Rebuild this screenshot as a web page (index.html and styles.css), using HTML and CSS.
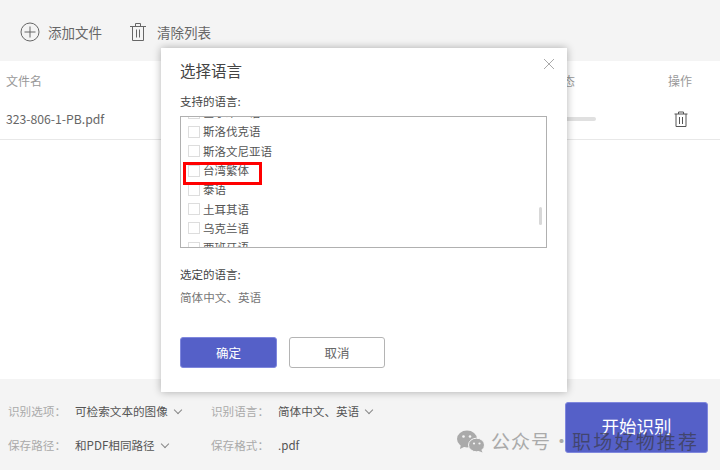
FILE: index.html
```html
<!DOCTYPE html>
<html>
<head>
<meta charset="utf-8" />
<title>选择语言</title>
<link rel="stylesheet" href="styles.css">
</head>
<body>

<div class="app">
	<div class="toolbar">
		<div class="tool">
			<svg width="20" height="20" viewBox="0 0 20 20" fill="none" stroke="#666"><circle cx="10" cy="10" r="9"/><path d="M10 4.500v11M4.500 10h11"/></svg>
			<span>添加文件</span>
		</div>
		<div class="tool tool-clear">
			<svg width="16" height="18" viewBox="0 0 16 18" fill="none" stroke="#666"><path d="M0 3.500h16M5.500 3.500V.5h5v3M2.500 3.500v14h11v-14M6.500 6.500v8M9.500 6.500v8"/></svg>
			<span>清除列表</span>
		</div>
	</div>

	<div class="files">
		<div class="file-head">
			<span>文件名</span>
			<span class="head-state">状态</span>
			<span class="head-action">操作</span>
		</div>
		<div class="file-row">
			<span class="file-name">323-806-1-PB.pdf</span>
			<div class="progress"></div>
			<svg class="row-trash" width="14" height="16" viewBox="0 0 14 16" fill="none" stroke="#555"><path d="M.5 3h13M4.500 3V1h5v2M2 3v12.500h10V3M5.500 6v7M8.500 6v7"/></svg>
		</div>
	</div>

	<div class="options">
		<div class="option-lines">
			<div class="option-line">
				<span class="label">识别选项：</span>
				<span class="value value-a">可检索文本的图像<i class="arrow"></i></span>
				<span class="label">识别语言：</span>
				<span class="value">简体中文、英语<i class="arrow"></i></span>
			</div>
			<div class="option-line">
				<span class="label">保存路径：</span>
				<span class="value value-a">和PDF相同路径<i class="arrow"></i></span>
				<span class="label">保存格式：</span>
				<span class="value">.pdf</span>
			</div>
		</div>
		<button class="start">开始识别</button>
	</div>
</div>

<div class="dialog">
	<svg class="close" width="10" height="10" viewBox="0 0 10 10" fill="none" stroke="#aaa"><path d="M0 0l10 10M10 0L0 10"/></svg>
	<h2>选择语言</h2>
	<p class="dlg-label">支持的语言:</p>
	<div class="lang-box">
		<ul class="lang-list">
			<li><i></i>塞尔维亚语</li>
			<li><i></i>斯洛伐克语</li>
			<li><i></i>斯洛文尼亚语</li>
			<li><i></i>台湾繁体</li>
			<li><i></i>泰语</li>
			<li><i></i>土耳其语</li>
			<li><i></i>乌克兰语</li>
			<li><i></i>西班牙语</li>
		</ul>
		<div class="thumb"></div>
	</div>
	<p class="dlg-label chosen-label">选定的语言:</p>
	<p class="chosen">简体中文、英语</p>
	<div class="dlg-btns">
		<button class="ok">确定</button>
		<button class="cancel">取消</button>
	</div>
</div>

<div class="mark"></div>

<div class="wm">
	<svg width="28" height="23" viewBox="0 0 28 23" fill="#aaa"><ellipse cx="10" cy="9" rx="10" ry="8.500"/><path d="M4 14l-1 5 6-3z"/><ellipse cx="19.500" cy="15" rx="8" ry="6.800" stroke="#f4f4f4"/><path d="M24 19l1.500 3.500-5-2z"/><circle cx="6.500" cy="6.500" r="1.300" fill="#f4f4f4"/><circle cx="13" cy="6.500" r="1.300" fill="#f4f4f4"/><circle cx="17" cy="13.500" r="1.100" fill="#f4f4f4"/><circle cx="22.500" cy="13.500" r="1.100" fill="#f4f4f4"/></svg>
	<span class="wm-gray">公众号</span>
	<span class="wm-dot">·</span>
	<span class="wm-dark">职场好物推荐</span>
</div>

</body>
</html>
```

FILE: styles.css
```css
/*reset*/
* { padding: 0; margin: 0; box-sizing: border-box; }
html, body { width: 720px; height: 470px; overflow: hidden; }
body { font-family: "Noto Sans CJK SC", "Noto Sans", sans-serif; font-size: 11.6px; color: #666; background: #fff; }
li { list-style: none; }
button { font-family: inherit; cursor: pointer; }

/*app*/
.app { display: flex; flex-direction: column; height: 470px; }

.toolbar { height: 61px; background: #f4f4f4; display: flex; align-items: center; padding: 3px 0 0 20px; }
.tool { display: flex; align-items: center; gap: 8px; font-size: 13.5px; line-height: 20px; color: #666; }
.tool-clear { margin-left: 28px; gap: 11px; }

.files { flex: 1; }
.file-head { display: flex; height: 38px; padding: 0 28px 0 6px; align-items: center; justify-content: space-between; color: #999; font-size: 12px; }
.head-state { margin-left: auto; width: 117px; }
.file-row { display: flex; height: 41px; padding: 0 32px 0 6px; align-items: center; border-bottom: 1px solid #e8e8e8; font-size: 12.2px; }
.file-name { color: #666; }
.progress { width: 100px; height: 4px; margin-left: auto; margin-right: 78px; border-radius: 2px; background: #e0e0e0; }
.row-trash { flex: none; }

.options { height: 91px; background: #f4f4f4; display: flex; align-items: flex-start; justify-content: space-between; padding: 15px 12px 0 8px; }
.option-line { display: flex; height: 34px; align-items: center; }
.label { width: 67px; color: #aaa; }
.value { color: #555; }
.value-a { width: 136px; }
.arrow { display: inline-block; width: 6px; height: 6px; margin: 0 0 3px 7px; border-right: 1px solid #888; border-bottom: 1px solid #888; transform: rotate(45deg); }
.start { width: 143px; height: 51px; margin-top: 8px; padding-bottom: 4px; border: 1px solid #7f87dd; border-radius: 3px; background: #5560c8; color: #fff; font-size: 17.5px; }

/*dialog*/
.dialog { position: absolute; left: 161px; top: 48px; width: 406px; height: 344px; padding: 11px 20px 0 19px; background: #fff; box-shadow: 0 0 8px rgba(0, 0, 0, .3); }
.dialog h2 { font-size: 15.5px; font-weight: 400; line-height: 22px; color: #444; }
.close { position: absolute; right: 13px; top: 11px; }
.dlg-label { margin-top: 11px; line-height: 18px; font-size: 11.5px; color: #444; }
.lang-box { position: relative; height: 132px; margin-top: 6px; border: 1px solid #b0b0b0; overflow: hidden; }
.lang-list { margin-top: -14px; }
.lang-list li { display: flex; align-items: center; height: 19.300px; padding-left: 7px; font-size: 11.5px; color: #555; line-height: 19px; }
.lang-list i { width: 12px; height: 12px; margin-right: 3px; border: 1px solid #ddd; background: #fff; }
.thumb { position: absolute; right: 4px; top: 90px; width: 3px; height: 18px; border-radius: 2px; background: #d8d8d8; }
.chosen-label { margin-top: 17px; }
.chosen { margin-top: 5px; line-height: 18px; color: #777; }
.dlg-btns { display: flex; gap: 12px; margin-top: 31px; }
.dlg-btns button { width: 97px; height: 31px; border-radius: 3px; font-size: 12.5px; }
.ok { border: 1px solid #7f87dd; background: #5560c8; color: #fff; }
.dlg-btns .cancel { width: 96px; border: 1px solid #b4b4b4; background: #fff; color: #666; }

/*red mark over the list*/
.mark { position: absolute; left: 183px; top: 162px; width: 79px; height: 23px; border: 3px solid #f00; }

/*watermark*/
.wm { position: absolute; left: 457px; top: 429px; display: flex; align-items: center; font-size: 19px; letter-spacing: 1px; line-height: 24px; white-space: nowrap; }
.wm-gray { margin-left: 6px; color: #aaa; }
.wm-dot { margin-left: 1px; color: #aaa; }
.wm-dark { margin-left: 0; color: rgba(60, 60, 80, .75); letter-spacing: 2.200px; }
```
